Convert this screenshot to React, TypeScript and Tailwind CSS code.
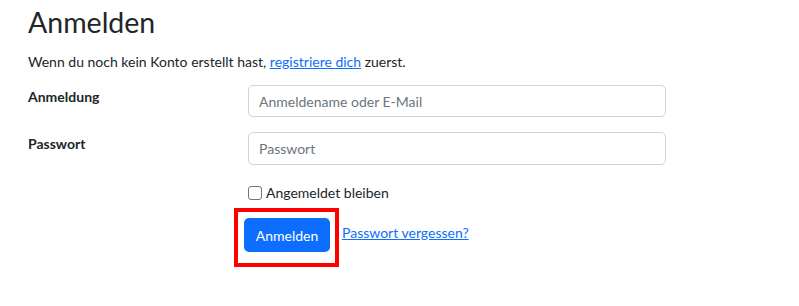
import { useState } from 'react';

const font = { fontFamily: 'Lato, "Noto Sans", Arial, sans-serif' };

export default function App() {
  const [remember, setRemember] = useState(false);

  return (
    <div className="w-[799px] h-[306px] bg-white text-[#212529] pl-[28px]" style={font}>
      <h1 className="pt-[3px] text-[28.5px] leading-[38px] font-normal">Anmelden</h1>

      <p className="mt-[11px] text-[14px] leading-[20px]">
        Wenn du noch kein Konto erstellt hast,{' '}
        <a href="#" className="text-[#0d6efd] underline">registriere dich</a> zuerst.
      </p>

      {/* Formular */}
      <form className="mt-[13px] flex flex-col">
        <div className="flex items-start">
          <label className="w-[220px] pt-[2px] text-[14px] font-bold leading-[20px]">Anmeldung</label>
          <input
            type="text"
            placeholder="Anmeldename oder E-Mail"
            className="w-[418px] h-[32px] px-[10px] text-[14px] border border-[#ced4da] rounded-[5px] placeholder:text-[#6c757d] outline-none"
          />
        </div>
        <div className="flex items-start mt-[15px]">
          <label className="w-[220px] pt-[2px] text-[14px] font-bold leading-[20px]">Passwort</label>
          <input
            type="password"
            placeholder="Passwort"
            className="w-[418px] h-[33px] px-[10px] text-[14px] border border-[#ced4da] rounded-[5px] placeholder:text-[#6c757d] outline-none"
          />
        </div>

        <div className="ml-[220px] mt-[18px] flex items-center gap-[4px]">
          <input
            type="checkbox"
            checked={remember}
            onChange={() => setRemember(!remember)}
            className="w-[14px] h-[14px] m-0 appearance-none border border-[#6c757d] rounded-[3px] bg-white"
          />
          <span className="text-[14px] leading-[20px]">Angemeldet bleiben</span>
        </div>

        <div className="ml-[206px] mt-[5px] flex items-start">
          <div className="border-4 border-[#ff0000] pt-[6px] pb-[11px] pl-[6px] pr-[5px]">
            <button
              type="button"
              className="w-[86px] h-[34px] bg-[#0d6efd] text-white text-[14px] rounded-[5px]"
            >
              Anmelden
            </button>
          </div>
          <a href="#" className="ml-[3px] mt-[15px] text-[14px] leading-[20px] text-[#0d6efd] underline">
            Passwort vergessen?
          </a>
        </div>
      </form>
    </div>
  );
}
